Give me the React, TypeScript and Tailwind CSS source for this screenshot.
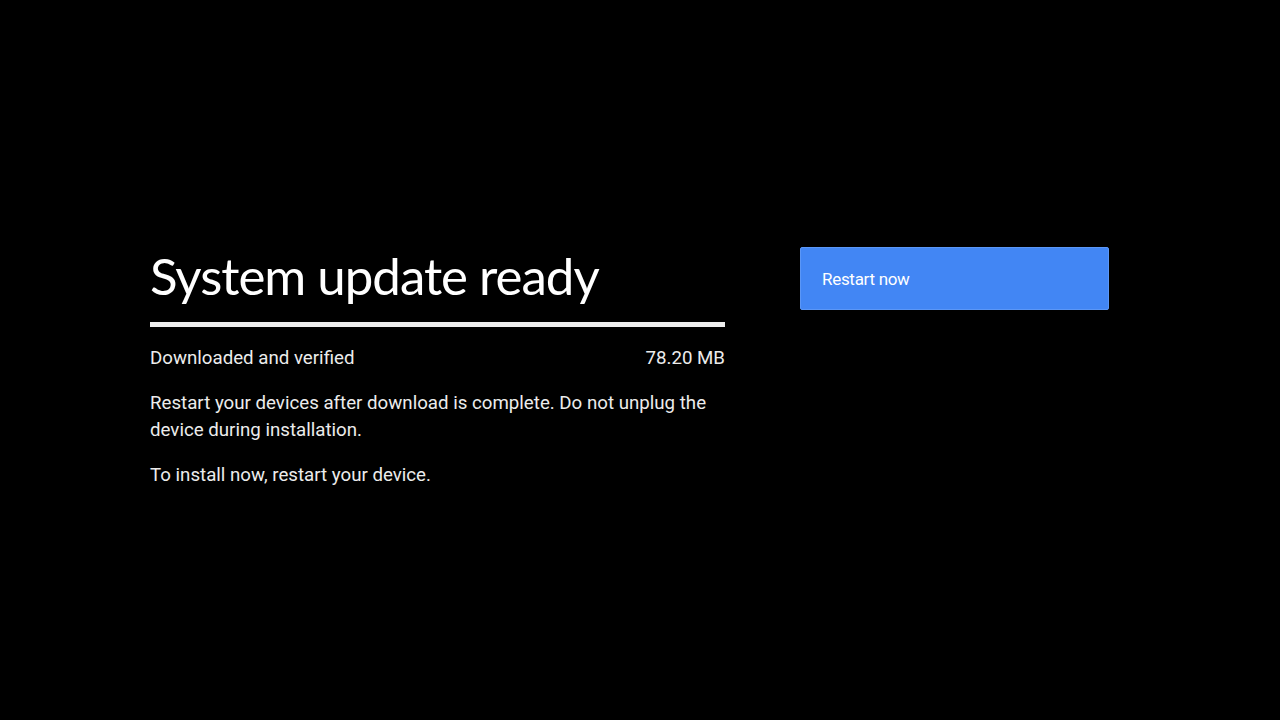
export default function App() {
  return (
    <div className="flex h-[720px] w-[1280px] bg-black text-[#ececec]" style={{ fontFamily: "Roboto, sans-serif" }}>
      <div className="ml-[150px] mt-[247px] flex w-[575px] flex-col">
        <h1
          className="mt-[-3px] text-[51px] leading-[64px] tracking-[-1px] text-white"
          style={{ fontFamily: "Lato, sans-serif" }}
        >
          System update ready
        </h1>
        <div className="mt-[14px] h-[5px] w-full bg-[#eeeeee]" />
        <div className="mt-[19px] flex justify-between text-[18.7px] leading-[24px]">
          <span>Downloaded and verified</span>
          <span>78.20 MB</span>
        </div>
        <p className="mt-[20px] text-[18.7px] leading-[27px]">
          Restart your devices after download is complete. Do not unplug the device during installation.
        </p>
        <p className="mt-[18px] text-[18.7px] leading-[27px]">To install now, restart your device.</p>
      </div>
      <div className="ml-[75px] mt-[247px]">
        <button className="flex h-[63px] w-[309px] items-center rounded-[2px] border border-[#5b97f7] bg-[#4286f4] pt-[3px] pl-[21px] text-[17px] tracking-[-0.3px] text-white">
          Restart now
        </button>
      </div>
    </div>
  );
}
